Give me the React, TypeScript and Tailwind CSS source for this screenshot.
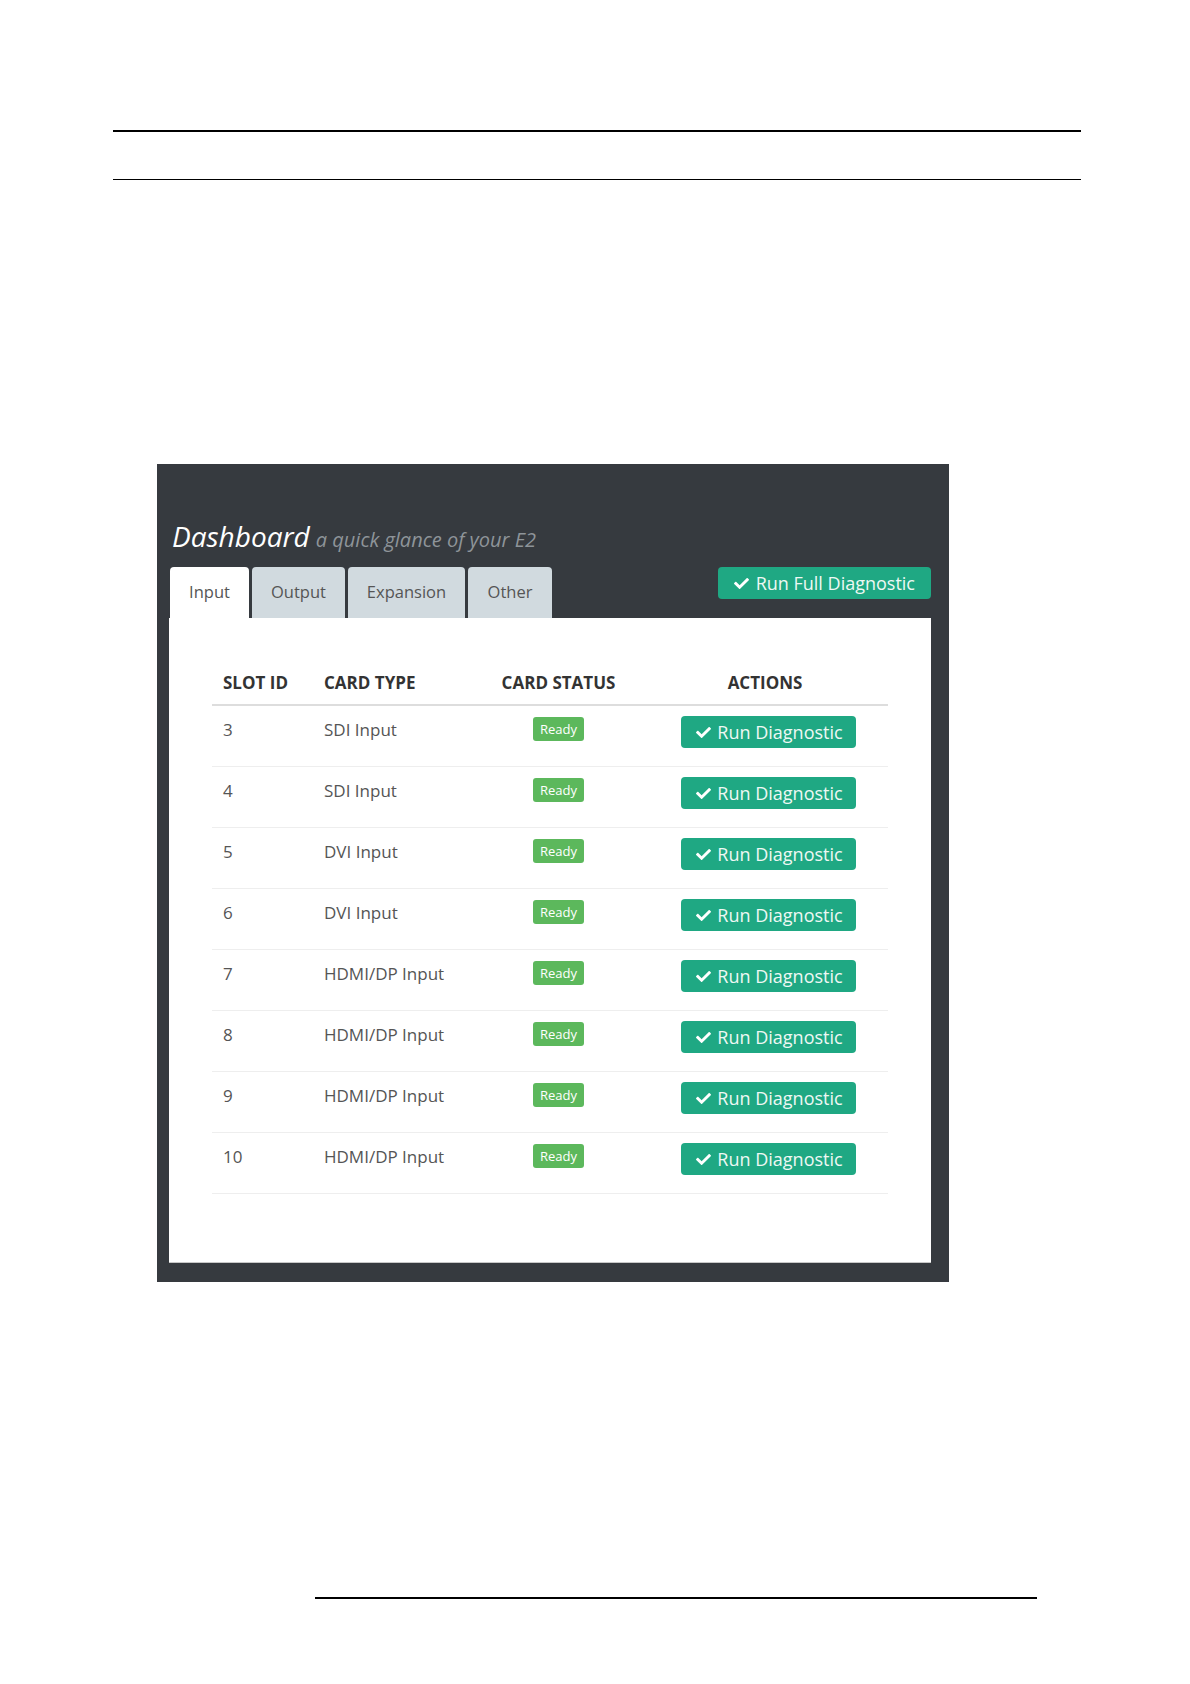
import React from "react";
import { FaCheck } from "react-icons/fa";

const rows = [
  { id: "3", type: "SDI Input" },
  { id: "4", type: "SDI Input" },
  { id: "5", type: "DVI Input" },
  { id: "6", type: "DVI Input" },
  { id: "7", type: "HDMI/DP Input" },
  { id: "8", type: "HDMI/DP Input" },
  { id: "9", type: "HDMI/DP Input" },
  { id: "10", type: "HDMI/DP Input" },
];

const tabs = [
  { label: "Input", w: "w-[79px]" },
  { label: "Output", w: "w-[93px]" },
  { label: "Expansion", w: "w-[117px]" },
  { label: "Other", w: "w-[84px]" },
];

export default function App() {
  return (
    <div
      className="w-[1190px] h-[1684px] bg-white flex flex-col"
      style={{ fontFamily: '"Open Sans", "Noto Sans", sans-serif' }}
    >
      <div className="mt-[130px] ml-[113px] w-[968px] h-[2px] bg-black" />
      <div className="mt-[47px] ml-[113px] w-[968px] h-px bg-black" />

      <div className="mt-[284px] ml-[157px] w-[792px] h-[818px] bg-[#363a3f] pl-[12px] pr-[18px] pt-[55px] pb-[19px] flex flex-col">
        <div className="flex items-baseline gap-[6px] leading-[34px] pl-[3px]">
          <span className="italic text-[28px] text-white">Dashboard</span>
          <span className="italic text-[20px] text-[#8e9499]">a quick glance of your E2</span>
        </div>

        <div className="mt-[10px] flex justify-between items-start">
          <div className="flex gap-[3px] ml-px">
            {tabs.map((t, i) => (
              <div
                key={t.label}
                className={
                  "h-[51px] flex items-center justify-center rounded-t-[4px] text-[16.5px] text-[#555] " +
                  t.w +
                  " " +
                  (i === 0 ? "bg-white" : "bg-[#d1dadf]")
                }
              >
                {t.label}
              </div>
            ))}
          </div>
          <div className="h-[32px] pl-[16px] pr-[16px] flex items-center gap-[7px] rounded-[4px] bg-[#1fa883] text-[#eef8f4] text-[18px]">
            <FaCheck className="w-[15px] h-[15px] text-white" />
            <span>Run Full Diagnostic</span>
          </div>
        </div>

        <div className="flex-1 bg-white border-b border-[#c8c8c8] pt-[54px] px-[43px]">
          <div className="grid grid-cols-[101px_162px_167px_246px] border-b-2 border-[#dddddd] pb-[10px] text-[17px] leading-[22px] font-bold text-[#333]">
            <div className="pl-[11px]">SLOT ID</div>
            <div className="pl-[11px]">CARD TYPE</div>
            <div className="text-center">CARD STATUS</div>
            <div className="text-center">ACTIONS</div>
          </div>
          {rows.map((r) => (
            <div
              key={r.id}
              className="grid grid-cols-[101px_162px_167px_246px] h-[61px] border-b border-[#eeeeee] pt-[10px] items-start text-[17px] leading-[23px] text-[#555]"
            >
              <div className="pl-[11px] mt-[2px]">{r.id}</div>
              <div className="pl-[11px] mt-[2px]">{r.type}</div>
              <div className="flex justify-center mt-px">
                <span className="h-[24px] px-[7px] flex items-center rounded-[3px] bg-[#5cb85c] text-white text-[13px]">
                  Ready
                </span>
              </div>
              <div className="flex justify-center pl-[7px]">
                <span className="h-[32px] pl-[15px] pr-[13px] flex items-center gap-[6px] rounded-[4px] bg-[#1fa883] text-[#eef8f4] text-[18px]">
                  <FaCheck className="w-[15px] h-[15px] text-white" />
                  <span>Run Diagnostic</span>
                </span>
              </div>
            </div>
          ))}
        </div>
      </div>

      <div className="mt-[315px] ml-[315px] w-[722px] h-[2px] bg-black" />
    </div>
  );
}
